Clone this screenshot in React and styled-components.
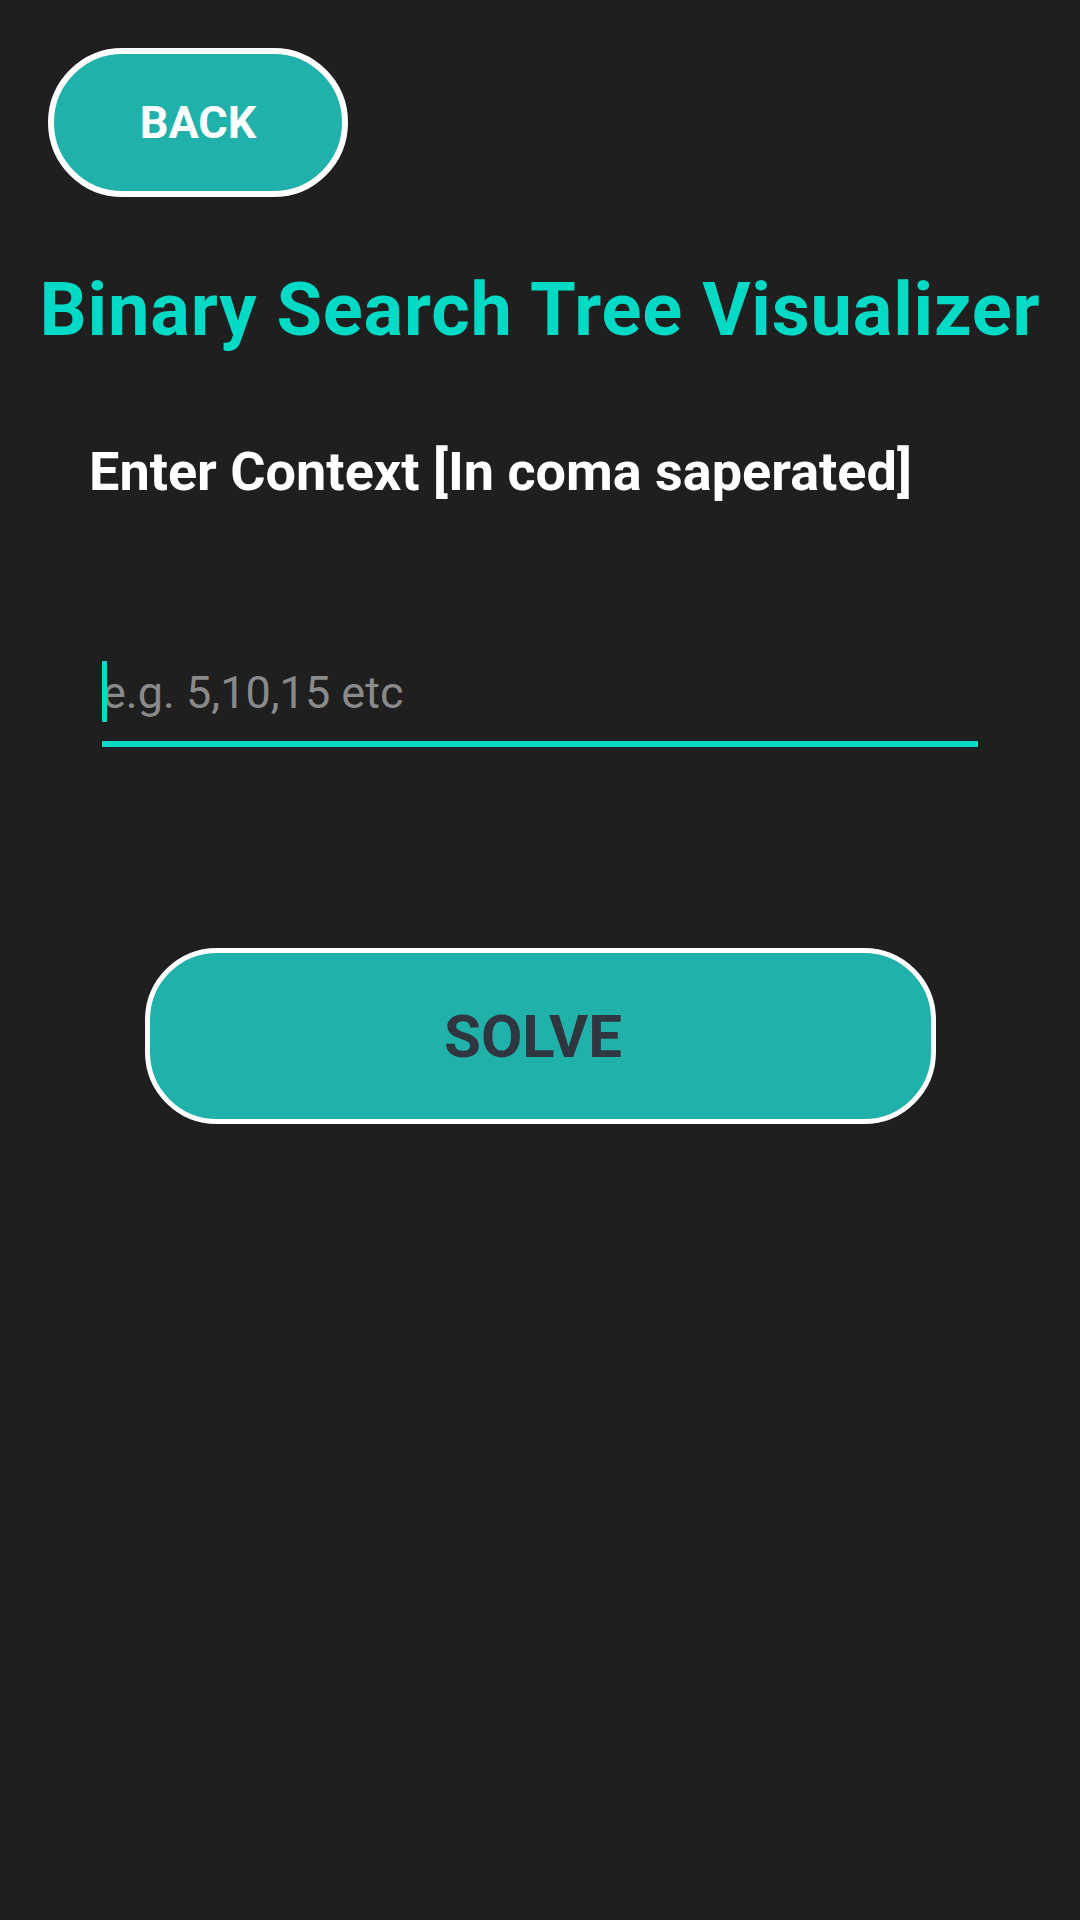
import React from "react";
import styled, { createGlobalStyle } from "styled-components";

const GlobalStyle = createGlobalStyle`
  html, body {
    margin: 0;
    padding: 0;
    background: #1f1f1f;
  }
  body {
    font-family: Roboto, "Liberation Sans", sans-serif;
  }
`;

const Page = styled.div`
  min-height: 1920px;
  box-sizing: border-box;
  padding: 48px 0 0;
  background: #1f1f1f;
  display: flex;
  flex-direction: column;
`;

const PillButton = styled.button`
  box-sizing: border-box;
  background: #20b2aa;
  border: ${(p) => p.$border}px solid #ffffff;
  border-radius: ${(p) => p.$radius}px;
  font-family: Roboto, "Liberation Sans", sans-serif;
  font-weight: 700;
  padding: 0;
  cursor: pointer;
  display: flex;
  align-items: center;
  justify-content: center;
`;

const BackButton = styled(PillButton)`
  margin-left: 48px;
  width: 300px;
  height: 149px;
  color: #ffffff;
  font-size: 45px;
`;

const Title = styled.h1`
  margin: 77px 0 0;
  text-align: center;
  color: #03dac5;
  font-size: 74px;
  line-height: 72px;
  font-weight: 700;
  letter-spacing: 0.8px;
  white-space: nowrap;
`;

const Label = styled.div`
  margin: 99px 0 0 89px;
  color: #ffffff;
  font-size: 54px;
  line-height: 53px;
  font-weight: 700;
  white-space: nowrap;
`;

const InputWrap = styled.div`
  position: relative;
  margin: 152px 102px 0;
`;

const Input = styled.input`
  box-sizing: border-box;
  width: 100%;
  height: 97px;
  padding: 0 0 6px;
  border: none;
  border-bottom: 6px solid #03dac5;
  background: transparent;
  color: #ffffff;
  font-family: Roboto, "Liberation Sans", sans-serif;
  font-size: 45px;
  outline: none;

  &::placeholder {
    color: #8a8a8a;
  }
`;

const Caret = styled.span`
  position: absolute;
  left: 0;
  top: 11px;
  width: 5px;
  height: 61px;
  background: #03dac5;
`;

const SolveButton = styled(PillButton)`
  margin: 201px auto 0;
  width: 791px;
  height: 176px;
  padding-right: 14px;
  color: #30363f;
  font-size: 60px;
`;

export default function App() {
  return (
    <>
      <GlobalStyle />
      <Page>
        <BackButton $border={6} $radius={75}>BACK</BackButton>
        <Title>Binary Search Tree Visualizer</Title>
        <Label>Enter Context [In coma saperated]</Label>
        <InputWrap>
          <Input placeholder="e.g. 5,10,15 etc" />
          <Caret />
        </InputWrap>
        <SolveButton $border={5} $radius={72}>SOLVE</SolveButton>
      </Page>
    </>
  );
}
